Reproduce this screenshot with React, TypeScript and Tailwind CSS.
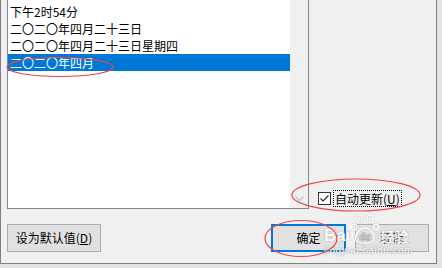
import React from "react";

const rows = ["下午2时54分", "二〇二〇年四月二十三日", "二〇二〇年四月二十三日星期四", "二〇二〇年四月"];

export default function App() {
  return (
    <div className="relative w-[442px] h-[268px] overflow-hidden bg-[#e4e4e4] font-['Noto_Sans_CJK_SC','Microsoft_YaHei',sans-serif] text-[12px] text-black">
      <div className="w-[437px] h-[264px] bg-[#f0f0f0] border-l border-r border-b border-[#7f7f7f] flex flex-col pl-[6px] pr-[7px]">
        <div className="flex h-[209px]">
          <div className="w-[302px] h-full border-l border-r border-b border-[#828790] flex">
            <div className="w-[282px] bg-white pt-[3px]">
              {rows.map((r, i) => (
                <div
                  key={i}
                  className={
                    i === 3
                      ? "h-[17px] leading-[17px] pl-[2px] bg-[#0078d7] text-white whitespace-nowrap"
                      : "h-[17px] leading-[17px] pl-[2px] whitespace-nowrap"
                  }
                >
                  {r}
                </div>
              ))}
            </div>
            <div className="w-[18px] bg-[#f0f0f0] flex flex-col justify-end items-center pb-[6px]">
              <svg width="9" height="6" viewBox="0 0 9 6">
                <path d="M0.5 0.5 L4.5 4.5 L8.5 0.5" stroke="#c2c2c2" strokeWidth="1.2" fill="none" />
              </svg>
            </div>
          </div>
          <div className="flex-1 flex flex-col justify-end pb-[2px] pl-[9px]">
            <div className="flex items-center h-[17px]">
              <div className="w-[13px] h-[13px] border border-[#333] bg-white flex items-center justify-center">
                <svg width="11" height="11" viewBox="0 0 11 11">
                  <path d="M1.5 5.5 L4 8 L9.5 2.5" stroke="#222" strokeWidth="1.1" fill="none" />
                </svg>
              </div>
              <div className="ml-[2px] h-[17px] leading-[15px] px-[1px] border border-dotted border-black whitespace-nowrap">
                自动更新(<span className="underline">U</span>)
              </div>
            </div>
          </div>
        </div>
        <div className="flex items-start mt-[15px]">
          <div className="w-[94px] h-[28px] border border-[#adadad] bg-[#e1e1e1] flex items-center justify-center whitespace-nowrap">
            设为默认值(<span className="underline">D</span>)
          </div>
          <div className="flex-1" />
          <div className="w-[75px] h-[28px] border-2 border-[#0078d7] bg-[#e1e1e1] flex items-center justify-center">
            确定
          </div>
          <div className="w-[74px] h-[28px] ml-[9px] border border-[#adadad] bg-[#e1e1e1] flex items-center justify-center">
            取消
          </div>
        </div>
      </div>

      {/* Baidu watermark */}
      <div className="absolute left-[324px] top-[213px] pointer-events-none text-white opacity-90" style={{ textShadow: "0 0 1px #9a9a9a, 0 0 1px #9a9a9a" }}>
        <div className="flex items-end font-['Liberation_Sans',sans-serif] font-bold text-[17px] leading-[18px]">
          <span>Bai</span>
          <svg width="28" height="32" viewBox="0 0 28 32" className="mx-[1px]">
            <g fill="none" stroke="#c8c8c8" strokeWidth="2.6">
              <ellipse cx="8" cy="6" rx="3" ry="4" />
              <ellipse cx="19" cy="6" rx="3" ry="4" />
              <ellipse cx="3" cy="14" rx="2.5" ry="3" />
              <ellipse cx="25" cy="14" rx="2.5" ry="3" />
              <path d="M6 28 C2 24 8 15 14 15 C20 15 26 24 22 28 C19 31 9 31 6 28 Z" />
            </g>
            <g fill="none" stroke="#fff" strokeWidth="1.6">
              <ellipse cx="8" cy="6" rx="3" ry="4" />
              <ellipse cx="19" cy="6" rx="3" ry="4" />
              <ellipse cx="3" cy="14" rx="2.5" ry="3" />
              <ellipse cx="25" cy="14" rx="2.5" ry="3" />
              <path d="M6 28 C2 24 8 15 14 15 C20 15 26 24 22 28 C19 31 9 31 6 28 Z" />
            </g>
            <text x="14" y="27" textAnchor="middle" fontSize="9" fontWeight="bold" fill="#fff" stroke="#b0b0b0" strokeWidth="0.3" fontFamily="Liberation Sans">du</text>
          </svg>
          <span className="font-['Noto_Sans_CJK_SC',sans-serif] text-[14px]">经验</span>
        </div>
        <div className="font-['Liberation_Sans',sans-serif] text-[10px] leading-[10px] tracking-[0.5px] mt-[1px]">jingyan.baidu.com</div>
      </div>

      {/* red annotation ellipses */}
      <svg className="absolute left-0 top-0 pointer-events-none" width="442" height="268">
        <g fill="none" stroke="#e8474c" strokeWidth="1.2">
          <ellipse cx="60" cy="67" rx="53" ry="9.5" />
          <ellipse cx="356" cy="195" rx="64" ry="16" />
          <ellipse cx="301" cy="238.5" rx="36" ry="18" />
        </g>
      </svg>
    </div>
  );
}
